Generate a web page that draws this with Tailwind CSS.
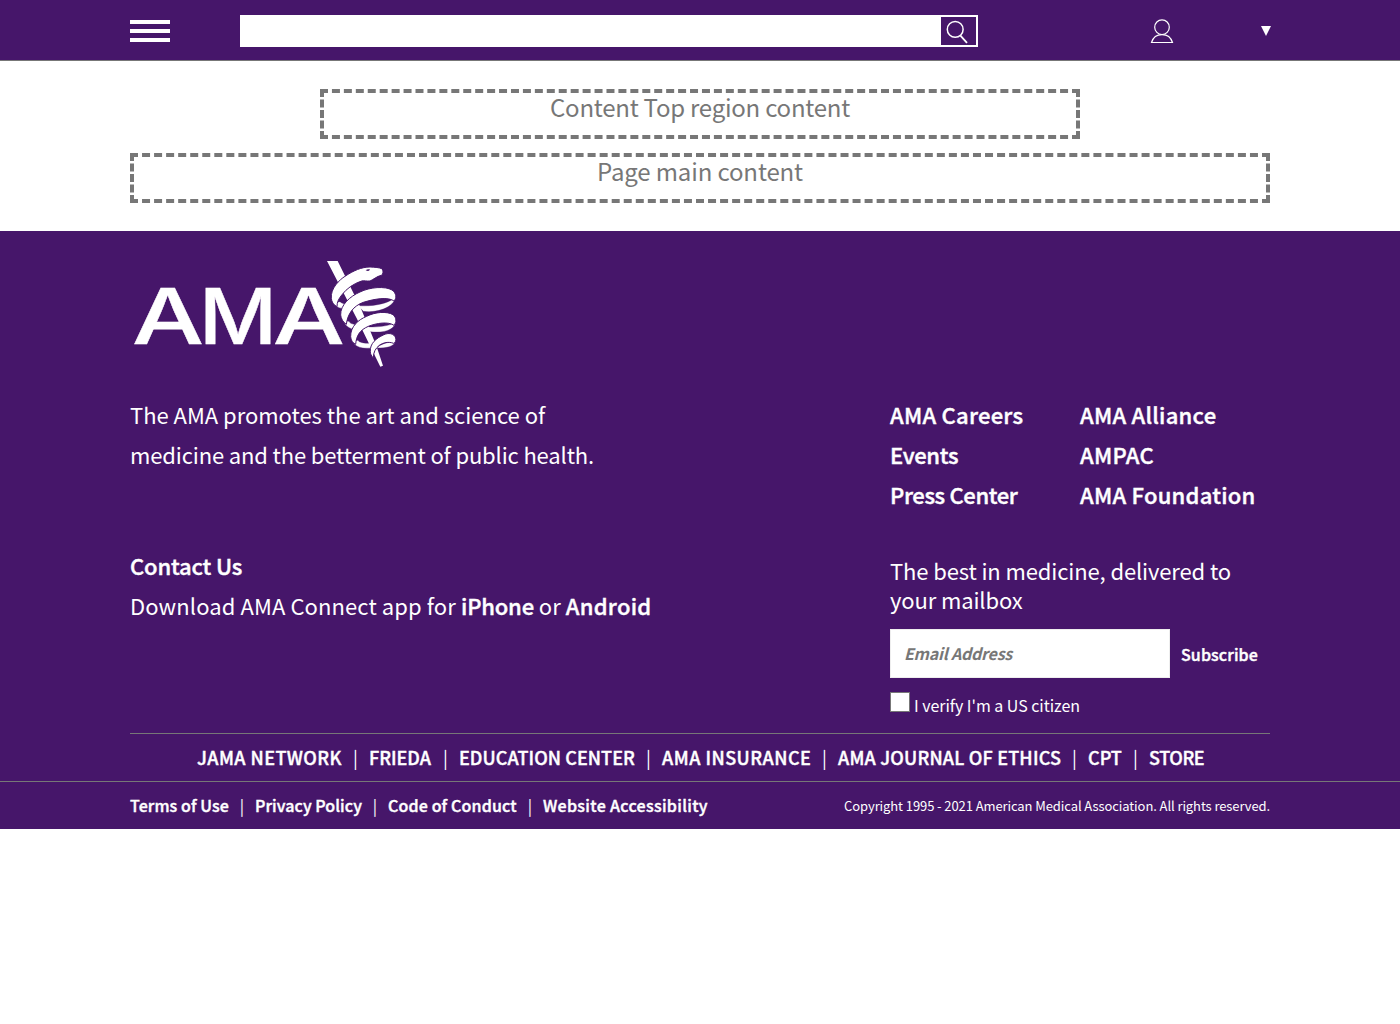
<!DOCTYPE html>
<html lang="en">
<head>
<meta charset="utf-8">
<title>American Medical Association</title>
<script src="https://cdn.jsdelivr.net/npm/@tailwindcss/browser@4"></script>
</head>
<body class="bg-white font-['Noto_Sans_CJK_SC',sans-serif]">
<header class="h-[61px] border-b border-[#777] bg-[#46166a]">
  <div class="mx-auto flex h-[60px] w-[1140px] items-start">
    <button class="mt-5 flex w-10 shrink-0 flex-col gap-[5px]" aria-label="Menu">
      <span class="h-1 w-10 bg-white"></span><span class="h-1 w-10 bg-white"></span><span class="h-1 w-10 bg-white"></span>
    </button>
    <form class="mt-[15px] ml-[70px] flex h-8 w-[738px] shrink-0 border-2 border-white">
      <input class="h-7 w-[699px] bg-white" aria-label="Search">
      <button type="button" class="h-7 w-[35px]" aria-label="Submit search">
        <svg class="h-7 w-[35px]" viewBox="0 0 35 28" fill="none" stroke="#fff" stroke-width="1.5"><circle cx="14.2" cy="12.4" r="7.9"/><path d="M19.2 18.4 26 25.8" stroke-width="1.8"/></svg>
      </button>
    </form>
    <svg class="mt-[18px] ml-[172px] h-7 w-6 shrink-0" viewBox="0 0 24 28" fill="none" stroke="#fff" stroke-width="1.2"><circle cx="12" cy="9.2" r="7.3"/><path d="M1.5 24.5C3 19.5 7 16.6 12 16.6S21 19.5 22.5 24.5Z"/></svg>
    <svg class="mt-[26px] ml-[87px] h-[10px] w-[10px] shrink-0" viewBox="0 0 10 10" fill="#fff"><path d="M0 0H10L5 10Z"/></svg>
  </div>
</header>
<main class="mx-auto flex h-[170px] w-[1140px] flex-col items-center gap-[14px] pt-7 text-2xl/[27px] text-[#777]">
  <div class="h-[50px] w-[760px] border-4 border-dashed border-[#777] text-center tracking-[-0.24px]">Content Top region content</div>
  <div class="h-[50px] w-full border-4 border-dashed border-[#777] text-center tracking-[-0.13px]">Page main content</div>
</main>
<footer class="h-[598px] bg-[#46166a] text-white">
  <div class="mx-auto flex h-[502px] w-[1140px] justify-between">
    <div class="w-[560px] pt-[30px]">
      <svg class="h-[108px] w-[270px]" viewBox="130 261 270 108" fill="#fff" role="img" aria-label="AMA">
        <g font-family="Inter" font-weight="500" font-size="77" stroke="#fff" stroke-width=".4">
          <text transform="translate(132 343.8) scale(1.32 1)">A</text>
          <text transform="translate(199 343.8) scale(1.11 1)">M</text>
          <text transform="translate(272.8 343.8) scale(1.32 1)">A</text>
        </g>
        <g transform="translate(320 255) scale(.33333)" stroke="#46166a" stroke-width="1" stroke-linejoin="round">
          <path d="M47 152C52 140 58 137 64 143L82 151 74 161C62 160 54 158 47 152Z"/>
          <path d="M228 118C230 152 180 175 130 169L114 152C160 155 200 146 221 131Z"/>
          <path d="M74 206C80 195 86 197 92 205L112 211 102 223C90 221 82 216 74 206Z"/>
          <path d="M228 192C230 226 190 235 150 230L138 215C175 218 205 212 222 205Z"/>
          <path d="M102 266C108 254 112 254 118 260C130 265 142 265 155 264L160 278C135 282 113 279 102 266Z"/>
          <path d="M228 250C228 275 200 281 168 278C185 266 205 261 221 260Z"/>
          <path stroke="none" d="M21 18H53L122 158 169 272 189 332 181 335 150 272 110 190Z"/>
          <path stroke-width="3" d="M34 130C31 100 59 74 75 64C100 47 125 36 150 36C165 37 178 37 187 42C191 50 189 58 184 61C170 64 160 74 150 78C140 79 132 76 125 78C100 86 80 101 66 119C56 131 51 141 51 155C40 150 35 140 34 130Z"/>
          <path stroke-width="3" d="M62 180C61 150 90 124 120 111C150 96 195 93 216 105C230 115 230 130 222 138C205 125 165 131 130 142C100 153 83 176 79 208C69 202 63 190 62 180Z"/>
          <path stroke-width="3" d="M92 245C91 215 115 194 140 184C165 171 200 168 219 179C230 188 230 202 222 211C205 199 170 204 145 214C120 225 109 241 107 268C97 264 93 255 92 245Z"/>
          <path stroke-width="3" d="M151 290C149 265 170 249 190 240C205 232 222 235 227 249C229 257 226 262 221 265C205 259 190 263 178 271C166 281 161 290 160 308C154 303 151 296 151 290Z"/>
          <path fill="#46166a" stroke="none" d="M137 46Q142 41 150 43Q148 49 143 48Z"/>
        </g>
      </svg>
      <div class="mt-[25px] text-[22px]/10">
        <p class="tracking-[-0.02px]">The AMA promotes the art and science of</p>
        <p class="tracking-[-0.144px]">medicine and the betterment of public health.</p>
      </div>
      <div class="mt-[71px] text-[22px]/10 whitespace-nowrap">
        <p class="font-medium tracking-[-0.15px] [-webkit-text-stroke:0.4px]">Contact Us</p>
        <p><span class="tracking-[0.1px]">Download AMA Connect app for </span><a class="font-medium tracking-[-0.17px] [-webkit-text-stroke:0.4px]">iPhone</a> or <a class="font-medium tracking-[0.3px] [-webkit-text-stroke:0.4px]">Android</a></p>
      </div>
    </div>
    <div class="w-[380px] pt-[163px]">
      <div class="grid grid-cols-2 text-[22px]/10 font-medium tracking-[0.25px] whitespace-nowrap [-webkit-text-stroke:0.4px]">
        <a>AMA Careers</a><a>AMA Alliance</a><a class="tracking-[-0.3px]">Events</a><a>AMPAC</a><a class="tracking-[-0.35px]">Press Center</a><a>AMA Foundation</a>
      </div>
      <p class="mt-[42px] text-[22px]/[29px] tracking-[-0.12px]">The best in medicine, delivered to<br>your mailbox</p>
      <div class="mt-[15px] flex h-[49px]">
        <div class="w-[280px] border border-[#eee] bg-white pl-[13px] text-base/[47px] font-bold tracking-[-0.23px] text-[#777] italic">Email Address</div>
        <div class="ml-[11px] pt-px text-base/[48px] font-medium tracking-[0.12px] [-webkit-text-stroke:0.4px]">Subscribe</div>
      </div>
      <div class="mt-[14px] flex gap-1">
        <span class="size-5 border border-[#777] bg-white"></span>
        <span class="text-base/[26px] tracking-[-0.03px]">I verify I'm a US citizen</span>
      </div>
    </div>
  </div>
  <nav class="mx-auto flex h-12 w-[1140px] border-t border-[#777] pl-[67px] text-lg/[47px] font-medium whitespace-nowrap [-webkit-text-stroke:0.4px]">
    <a class="w-[145px] tracking-[0.45px]">JAMA NETWORK</a><span class="w-[27px] text-center font-normal [-webkit-text-stroke:0px]">|</span>
    <a class="w-[63px]">FRIEDA</a><span class="w-[27px] text-center font-normal [-webkit-text-stroke:0px]">|</span>
    <a class="w-[176px] tracking-[0.07px]">EDUCATION CENTER</a><span class="w-[27px] text-center font-normal [-webkit-text-stroke:0px]">|</span>
    <a class="w-[149px] tracking-[0.5px]">AMA INSURANCE</a><span class="w-[27px] text-center font-normal [-webkit-text-stroke:0px]">|</span>
    <a class="w-[223px] tracking-[0.2px]">AMA JOURNAL OF ETHICS</a><span class="w-[27px] text-center font-normal [-webkit-text-stroke:0px]">|</span>
    <a class="w-[34px]">CPT</a><span class="w-[27px] text-center font-normal [-webkit-text-stroke:0px]">|</span>
    <a class="w-[55px] tracking-[-0.4px]">STORE</a>
  </nav>
  <div class="h-12 border-t border-[#777]">
    <div class="mx-auto flex w-[1140px] text-base/[47px] whitespace-nowrap">
      <nav class="flex font-medium [-webkit-text-stroke:0.4px]">
        <a class="w-[99px] tracking-[0.1px]">Terms of Use</a><span class="w-[26px] text-center font-normal [-webkit-text-stroke:0px]">|</span>
        <a class="w-[107px] tracking-[0.07px]">Privacy Policy</a><span class="w-[26px] text-center font-normal [-webkit-text-stroke:0px]">|</span>
        <a class="w-[129px] tracking-[0.15px]">Code of Conduct</a><span class="w-[26px] text-center font-normal [-webkit-text-stroke:0px]">|</span>
        <a class="w-[165px] tracking-[0.32px]">Website Accessibility</a>
      </nav>
      <p class="ml-auto text-[13px]/[47px] tracking-[-0.09px]">Copyright 1995 - 2021 American Medical Association. All rights reserved.</p>
    </div>
  </div>
</footer>
</body>
</html>
